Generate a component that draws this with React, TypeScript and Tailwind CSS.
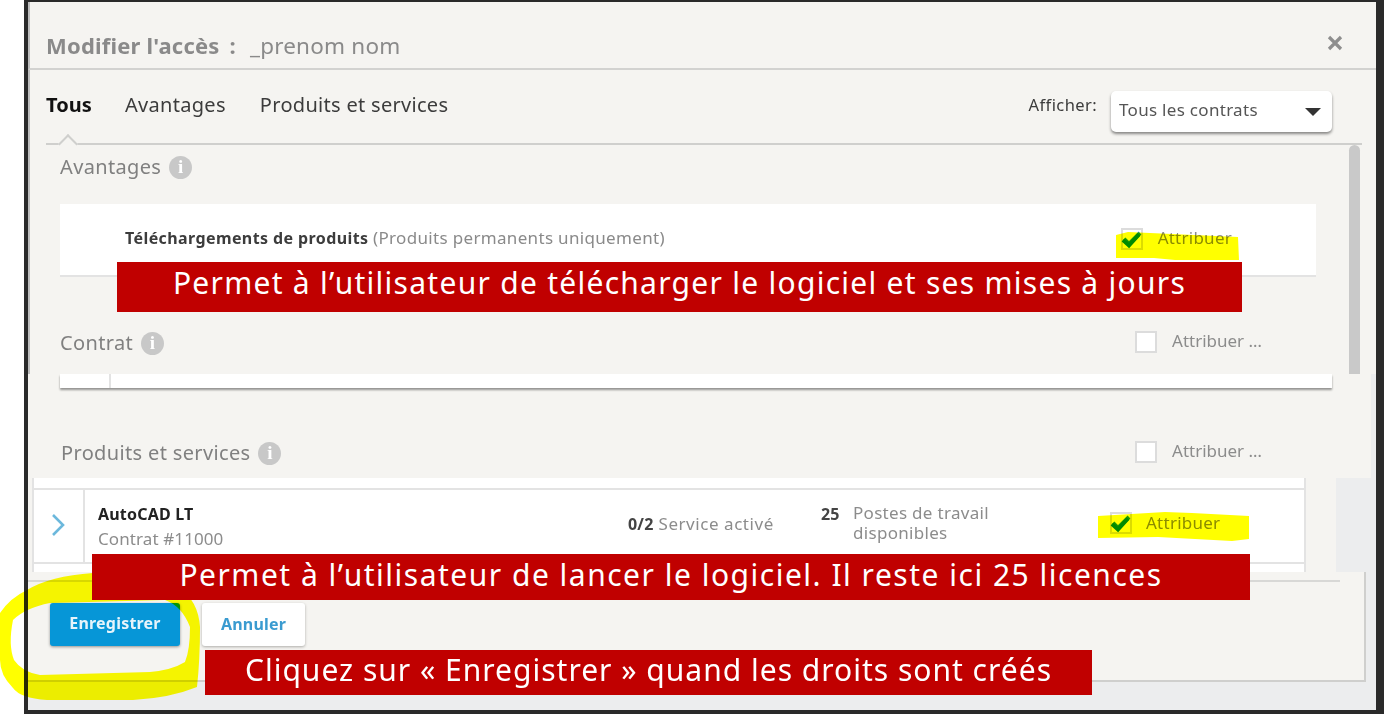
import React from "react";

const font = { fontFamily: '"Noto Sans", sans-serif' };

function Check() {
  return (
    <svg viewBox="0 0 22 22" className="w-[22px] h-[22px]">
      <path d="M3 11 L8 16 L19 5" fill="none" stroke="#1b9ad6" strokeWidth="4" />
      <path d="M2 12 L8 17.5 L18 6.5" fill="none" stroke="#008a00" strokeWidth="4" />
    </svg>
  );
}

function Box({ checked }: { checked?: boolean }) {
  return (
    <div className="w-[22px] h-[22px] shrink-0 bg-white border-2 border-[#dcdcdc]">
      {checked ? <div className="-m-[2px]"><Check /></div> : null}
    </div>
  );
}

function Info() {
  return (
    <span className="inline-flex items-center justify-center w-[23px] h-[23px] rounded-full bg-[#c8c8c8] text-white text-[19px] font-bold font-['Liberation_Serif',serif]">
      i
    </span>
  );
}

function SectionHead({ label }: { label: string }) {
  return (
    <div className="flex items-center gap-2 text-[20px] leading-[28px] text-[#808080] tracking-[0.35px]">
      <span>{label}</span>
      <Info />
    </div>
  );
}

function Assign() {
  return (
    <div className="flex items-center gap-[15px] text-[17px] text-[#8c8c8c]">
      <Box />
      <span className="-mt-[2px]">Attribuer …</span>
    </div>
  );
}

export default function App() {
  return (
    <div className="relative w-[1384px] h-[714px] bg-white overflow-hidden" style={font}>
      <div className="ml-[24px] w-[1360px] h-[714px] flex flex-col border-l-4 border-r-8 border-t-2 border-b-4 border-[#2a2a2a] bg-[#ecedee]">
        {/* Header */}
        <div className="h-[68px] shrink-0 flex items-center justify-between bg-[#f5f4f1] border-b-2 border-l-2 border-b-[#d2d2d0] border-l-[#bdbdbd] pl-[16px] pr-[33px] pt-[20px]">
          <div className="text-[22px] text-[#8a8a8a] leading-[30px] tracking-[0.2px]">
            <span className="font-bold">Modifier l'accès</span>
            <span className="font-bold ml-[10px]">:</span>
            <span className="ml-[14px] text-[22.5px]">_prenom nom</span>
          </div>
          <svg viewBox="0 0 16 16" className="w-[16px] h-[16px] -mt-[5px]">
            <path d="M2 2 L14 14 M14 2 L2 14" stroke="#8e8e8e" strokeWidth="3.2" />
          </svg>
        </div>

        {/* Tabs */}
        <div className="relative h-[75px] shrink-0 bg-[#f5f4f1] border-l-2 border-l-[#bdbdbd] flex items-start pl-[16px] pr-[44px]">
          <div className="flex gap-[34px] text-[20px] leading-[28px] text-[#3c3c3c] pt-[21px] tracking-[0.3px]">
            <span className="font-bold text-[#111] tracking-[0px] w-[45px]">Tous</span>
            <span>Avantages</span>
            <span>Produits et services</span>
          </div>
          <div className="ml-auto flex items-start gap-[14px] pt-[21px]">
            <span className="text-[16.5px] leading-[28px] text-[#3c3c3c] tracking-[0.4px]">Afficher:</span>
            <div className="w-[221px] h-[41px] flex items-center justify-between bg-white rounded-[5px] shadow-[0_2px_3px_rgba(0,0,0,0.45)] pl-[8px] pr-[11px] text-[17px] tracking-[0.3px] text-[#555]">
              <span className="pb-[3px]">Tous les contrats</span>
              <span className="w-0 h-0 border-l-[8px] border-r-[8px] border-t-[8px] border-l-transparent border-r-transparent border-t-[#333]" />
            </div>
          </div>
          <div className="absolute left-[16px] right-[14px] bottom-0 h-[2px] bg-[#cfcfcd]" />
          <div className="absolute left-[31px] bottom-[-6px] w-[14px] h-[14px] rotate-45 bg-[#f5f4f1] border-l-2 border-t-2 border-[#cfcfcd]" />
        </div>

        {/* Scrolling body */}
        <div className="h-[229px] shrink-0 flex bg-[#f5f4f1] border-l-2 border-l-[#bdbdbd]">
          <div className="w-[1319px] shrink-0 pl-[30px] pt-[8px]">
            <SectionHead label="Avantages" />
            <div className="mt-[23px] w-[1256px] h-[73px] bg-white border-b-2 border-[#e3e3e3] flex items-center pl-[65px] pr-[84px] justify-between">
              <div className="text-[16px] tracking-[0.4px] text-[#8a8a8a] -mt-[4px]">
                <span className="font-bold text-[#3c3c3c]">Téléchargements de produits</span>{" "}
                <span className="text-[17px] tracking-[0.33px]">(Produits permanents uniquement)</span>
              </div>
              <div className="flex items-center gap-[15px] text-[17px] tracking-[0.25px] text-[#8c8c8c] -mt-[2px]">
                <Box checked />
                <span className="-mt-[2px]">Attribuer</span>
              </div>
            </div>
            <div className="mt-[52px] flex items-center justify-between w-[1202px]">
              <SectionHead label="Contrat" />
              <div className="-mt-[3px]"><Assign /></div>
            </div>
          </div>
          <div className="w-[11px] shrink-0 bg-[#c9c9c9] rounded-t-[6px]" />
        </div>

        {/* Contract strip and products head */}
        <div className="h-[104px] w-[1343px] shrink-0 bg-[#f5f4f1] flex flex-col pl-[32px]">
          <div className="w-[1272px] h-[14px] bg-white flex shadow-[0_2px_2px_rgba(0,0,0,0.4)]">
            <div className="w-[51px] border-r-2 border-[#e3e3e3]" />
          </div>
          <div className="mt-[51px] w-[1202px] flex items-center justify-between pl-[1px]">
            <SectionHead label="Produits et services" />
            <div className="-mt-[3px]"><Assign /></div>
          </div>
        </div>

        {/* Product row */}
        <div className="h-[94px] shrink-0 flex">
          <div className="w-[1308px] shrink-0 bg-[#f5f4f1] pl-[4px]">
            <div className="w-[1274px] h-[94px] bg-white border-x-2 border-[#e3e3e3] pt-[10px] overflow-hidden">
              <div className="h-[76px] border-y-2 border-[#e3e3e3] flex items-stretch">
                <div className="w-[51px] shrink-0 border-r-2 border-[#e3e3e3] flex items-center justify-center pb-[2px] pr-[2px]">
                  <svg viewBox="0 0 16 24" className="w-[16px] h-[24px]">
                    <path d="M3 2 L13 12 L3 22" fill="none" stroke="#6cb8dc" strokeWidth="2.6" />
                  </svg>
                </div>
                <div className="w-[543px] shrink-0 pl-[13px] pt-[12px]">
                  <div className="text-[16px] leading-[24px] font-bold tracking-[0.2px] text-[#222]">AutoCAD LT</div>
                  <div className="text-[17px] leading-[26px] tracking-[0.1px] text-[#8c8c8c]">Contrat #11000</div>
                </div>
                <div className="w-[193px] shrink-0 pt-[21px] text-[17px] tracking-[0.55px] text-[#8c8c8c] whitespace-nowrap">
                  <span className="font-bold text-[16px] tracking-[0.2px] text-[#444]">0/2</span> Service activé
                </div>
                <div className="w-[32px] shrink-0 pt-[12px] text-[16px] font-bold text-[#444]">25</div>
                <div className="w-[257px] shrink-0 pt-[13px] text-[17px] tracking-[0.3px] leading-[20px] text-[#8c8c8c]">
                  Postes de travail<br />disponibles
                </div>
                <div className="flex items-start gap-[14px] pt-[22px] text-[17px] tracking-[0.25px] text-[#8c8c8c] leading-[22px]">
                  <Box checked />
                  <span>Attribuer</span>
                </div>
              </div>
            </div>
          </div>
        </div>

        {/* Footer */}
        <div className="h-[110px] w-[1338px] shrink-0 bg-[#f5f4f1] border-r-2 border-b-2 border-[#cfcfcd] pt-[8px]">
          <div className="h-[2px] w-[1312px] bg-[#d8d8d6]" />
          <div className="flex items-start gap-[22px] pl-[22px] pt-[21px]">
            <div className="w-[130px] h-[43px] rounded-[3px] bg-[#0696d7] shadow-[0_1px_3px_rgba(0,0,0,0.4)] flex items-center justify-center text-[16px] font-bold tracking-[0.2px] text-[#e6f4fb] pb-[3px]">
              Enregistrer
            </div>
            <div className="w-[103px] h-[43px] rounded-[3px] bg-white shadow-[0_1px_3px_rgba(0,0,0,0.3)] flex items-center justify-center text-[16px] font-bold tracking-[0.2px] text-[#3a9bd0] pb-[2px]">
              Annuler
            </div>
          </div>
        </div>
      </div>

      {/* Yellow marker strokes */}
      <svg className="absolute left-0 top-0 mix-blend-multiply pointer-events-none" width="1384" height="714" viewBox="0 0 1384 714">
        <path d="M1116 235 L1128 232 L1238 237 L1239 260 L1175 260 L1154 258 L1116 258 Z" fill="#ffff00" />
        <path d="M1098 516 L1165 512 L1192 513 L1249 516 L1249 539 L1232 541 L1158 537 L1098 538 Z" fill="#ffff00" />
        <path
          fillRule="evenodd"
          fill="#ffff00"
          d="M0 613 Q10 598 27 590 Q50 576 93 573 Q150 574 180 590 Q198 600 200 627 Q200 660 197 687 Q170 698 133 700 L47 700 Q20 698 13 688 Q0 675 0 660 Z M165 600 Q182 606 190 627 Q190 650 185 662 Q172 670 150 672 L40 675 Q22 672 14 660 Q8 645 13 620 Q25 608 50 603 Z"
        />
      </svg>

      {/* Red annotations */}
      <div className="absolute left-[117px] top-[262px] w-[1125px] h-[50px] bg-[#c00000] flex items-center justify-center text-white text-[30px] tracking-[1.27px] whitespace-nowrap pb-[10px]">
        Permet à l’utilisateur de télécharger le logiciel et ses mises à jours
      </div>
      <div className="absolute left-[92px] top-[554px] w-[1158px] h-[46px] bg-[#c00000] flex items-center justify-center text-white text-[30px] tracking-[1.5px] whitespace-nowrap pb-[6px]">
        Permet à l’utilisateur de lancer le logiciel. Il reste ici 25 licences
      </div>
      <div className="absolute left-[205px] top-[650px] w-[887px] h-[45px] bg-[#c00000] flex items-center justify-center text-white text-[30px] tracking-[1px] whitespace-nowrap pb-[6px]">
        Cliquez sur « Enregistrer » quand les droits sont créés
      </div>
    </div>
  );
}
